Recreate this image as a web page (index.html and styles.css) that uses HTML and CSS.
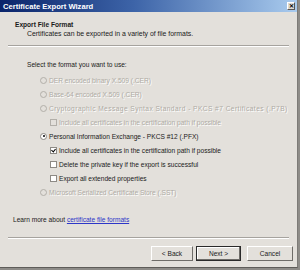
FILE: index.html
```html
<!DOCTYPE html>
<html lang="en">
<head>
  <meta charset="UTF-8">
  <title>Certificate Export Wizard</title>
  <link rel="stylesheet" href="styles.css">
</head>
<body>

  <div class="window">

    <!-- Title bar -->
    <div class="titlebar">
      <span class="title">Certificate Export Wizard</span>
      <span class="close">&#x2715;</span>
    </div>

    <!-- Header -->
    <div class="header">
      <div class="header-title">Export File Format</div>
      <div class="header-text">Certificates can be exported in a variety of file formats.</div>
    </div>
    <div class="rule"></div>

    <!-- Formats -->
    <div class="content">
      <div class="question">Select the format you want to use:</div>
      <div class="options">
        <div class="row disabled"><span class="radio"></span>DER encoded binary X.509 (.CER)</div>
        <div class="row disabled"><span class="radio"></span>Base-64 encoded X.509 (.CER)</div>
        <div class="row disabled wide"><span class="radio"></span>Cryptographic Message Syntax Standard - PKCS #7 Certificates (.P7B)</div>
        <div class="row sub disabled"><span class="check"></span>Include all certificates in the certification path if possible</div>
        <div class="row"><span class="radio on"></span>Personal Information Exchange - PKCS #12 (.PFX)</div>
        <div class="row sub"><span class="check on"></span>Include all certificates in the certification path if possible</div>
        <div class="row sub"><span class="check"></span>Delete the private key if the export is successful</div>
        <div class="row sub"><span class="check"></span>Export all extended properties</div>
        <div class="row disabled"><span class="radio"></span>Microsoft Serialized Certificate Store (.SST)</div>
      </div>
    </div>

    <div class="learn">Learn more about <a href="#">certificate file formats</a></div>
    <div class="rule"></div>

    <!-- Buttons -->
    <div class="buttons">
      <button class="button">&lt; Back</button>
      <button class="button default">Next &gt;</button>
      <button class="button cancel">Cancel</button>
    </div>

  </div>

</body>
</html>
```

FILE: styles.css
```css
body {
  margin: 0;
  background: #8e8c88;
  font-family: "Liberation Sans", Arial, sans-serif;
  font-size: 6.6px;
  color: #1a1a1a;
}

.window {
  width: 297px;
  height: 267px;
  background: #e3e0db;
  border-right: 1px solid #7d7b77;
  border-bottom: 1px solid #5e5c59;
  display: flex;
  flex-direction: column;
}

.titlebar {
  height: 12px;
  background: linear-gradient(90deg, #0a246a, #3d64a8 45%, #a9cbee);
  display: flex;
  align-items: center;
  justify-content: space-between;
  padding: 0 2px 0 3px;
}

.title {
  color: #fff;
  font-weight: bold;
  font-size: 7.6px;
}

.close {
  width: 8px;
  height: 8px;
  background: #dcd9d3;
  border: 1px solid;
  border-color: #fff #555 #555 #fff;
  box-sizing: border-box;
  font-size: 6px;
  font-weight: bold;
  line-height: 6px;
  text-align: center;
  color: #000;
}

.header {
  padding: 8px 0 8px 15px;
  height: 33px;
  box-sizing: border-box;
}

.header-title {
  font-weight: bold;
  line-height: 9px;
}

.header-text {
  padding-left: 12px;
  line-height: 9px;
  font-size: 6.9px;
}

.rule {
  margin: 0 8px;
  border-top: 1px solid #a6a39e;
  border-bottom: 1px solid #fff;
}

.content {
  padding: 14px 0 0 27px;
}

.question {
  line-height: 8px;
  margin-bottom: 7px;
}

.options {
  display: flex;
  flex-direction: column;
  gap: 6px;
}

.row {
  display: flex;
  align-items: center;
  height: 8px;
  padding-left: 13px;
  gap: 2px;
}

.row.sub {
  padding-left: 23px;
}

.row.wide {
  letter-spacing: 0.45px;
}

.disabled {
  color: #aeaba4;
  text-shadow: 1px 1px 0 #fff;
}

.radio {
  width: 7px;
  height: 7px;
  border-radius: 50%;
  box-sizing: border-box;
  border: 1px solid #8d8a85;
  background: #fff;
  position: relative;
}

.disabled .radio {
  background: #e3e0db;
  border-color: #b2afa9;
}

.radio.on::after {
  content: "";
  position: absolute;
  left: 1.5px;
  top: 1.5px;
  width: 2px;
  height: 2px;
  border-radius: 50%;
  background: #000;
}

.check {
  width: 7px;
  height: 7px;
  box-sizing: border-box;
  border: 1px solid #8d8a85;
  background: #fff;
  position: relative;
}

.disabled .check {
  background: #e3e0db;
  border-color: #b2afa9;
}

.check.on::after {
  content: "";
  position: absolute;
  left: 1px;
  top: 0;
  width: 2px;
  height: 3px;
  border: solid #000;
  border-width: 0 1px 1px 0;
  transform: rotate(40deg);
}

.learn {
  margin-top: auto;
  padding: 0 0 13px 13px;
  line-height: 8px;
}

.learn a {
  color: #2e37c8;
}

.buttons {
  display: flex;
  justify-content: flex-end;
  gap: 3px;
  padding: 7px 4px 6px 0;
}

.button {
  width: 42px;
  height: 15px;
  padding: 0;
  font-family: inherit;
  font-size: 6.6px;
  color: #1a1a1a;
  background: #e3e0db;
  border: 1px solid;
  border-color: #fff #6e6c68 #6e6c68 #fff;
}

.button.default {
  width: 45px;
  border: 1px solid #2a2a2a;
  box-shadow: inset -1px -1px 0 #6e6c68, inset 1px 1px 0 #fff;
}

.button.cancel {
  margin-left: 3px;
  width: 46px;
}
```
